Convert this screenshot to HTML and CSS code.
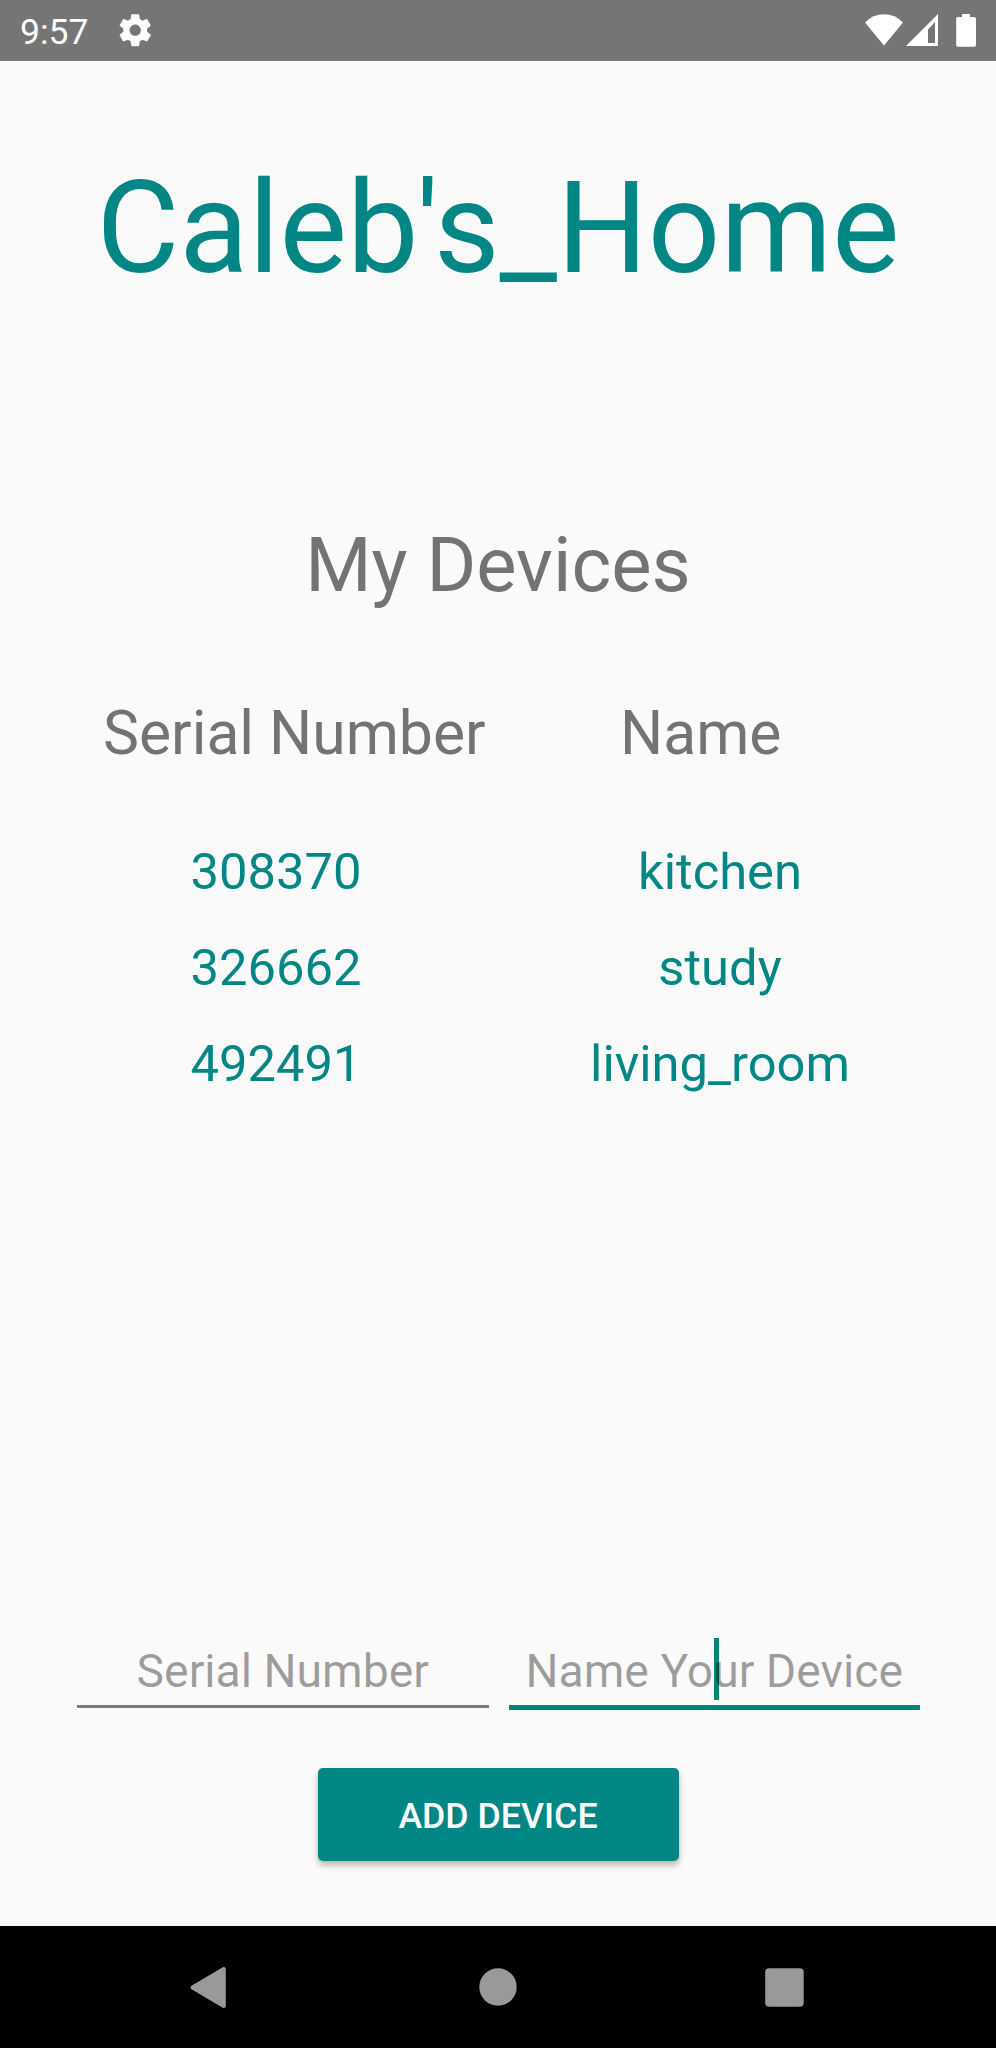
FILE: index.html
```html
<!DOCTYPE html>
<html lang="en">
<head>
<meta charset="utf-8">
<title>Caleb's_Home</title>
<link rel="stylesheet" href="styles.css">
</head>
<body>
<div class="screen">
  <header class="status-bar">
    <span class="clock">9:57</span>
    <svg class="gear" viewBox="0 0 24 24"><path fill="#fff" d="M19.43 12.98c.04-.32.07-.64.07-.98s-.03-.66-.07-.98l2.11-1.65c.19-.15.24-.42.12-.64l-2-3.46c-.12-.22-.39-.3-.61-.22l-2.49 1c-.52-.4-1.08-.73-1.69-.98l-.38-2.65C14.46 2.18 14.25 2 14 2h-4c-.25 0-.46.18-.49.42l-.38 2.65c-.61.25-1.17.59-1.69.98l-2.49-1c-.23-.09-.49 0-.61.22l-2 3.46c-.13.22-.07.49.12.64l2.11 1.65c-.04.32-.07.65-.07.98s.03.66.07.98l-2.11 1.65c-.19.15-.24.42-.12.64l2 3.46c.12.22.39.3.61.22l2.49-1c.52.4 1.08.73 1.69.98l.38 2.65c.03.24.24.42.49.42h4c.25 0 .46-.18.49-.42l.38-2.65c.61-.25 1.17-.59 1.69-.98l2.49 1c.23.09.49 0 .61-.22l2-3.46c.12-.22.07-.49-.12-.64l-2.11-1.65zM12 15.5c-1.93 0-3.5-1.57-3.5-3.5s1.57-3.5 3.5-3.5 3.5 1.57 3.5 3.5-1.57 3.5-3.5 3.5z"/></svg>
    <svg class="system-icons" viewBox="0 0 114 61">
      <path fill="#fff" d="M1 22.5Q9 14.2 20 14.2T39 22.5L20 45.5Z"/>
      <path fill="#fff" fill-rule="evenodd" d="M42 46L74 14V46ZM64 29.5V43H71V22Z"/>
      <path fill="#fff" d="M98 14H106V17H110.200Q112 17 112 18.800V44.900Q112 46.700 110.200 46.700H94Q92.200 46.700 92.200 44.900V18.800Q92.200 17 94 17H98Z"/>
    </svg>
  </header>

  <main class="content">
    <h1 class="title">Caleb's_Home</h1>
    <h2 class="subtitle">My Devices</h2>
    <div class="column-heads">
      <span class="head-serial">Serial Number</span>
      <span class="head-name">Name</span>
    </div>
    <div class="devices">
      <span>308370</span><span>kitchen</span>
      <span>326662</span><span>study</span>
      <span>492491</span><span>living_room</span>
    </div>
    <div class="fields">
      <div class="field"><span class="hint">Serial Number</span></div>
      <div class="field focused"><i class="caret"></i><span class="hint">Name Your Device</span></div>
    </div>
    <button class="add" type="button">ADD DEVICE</button>
  </main>

  <nav class="nav-bar">
    <svg class="nav-icons" viewBox="0 0 996 122">
      <path fill="#999" stroke="#999" stroke-width="4" stroke-linejoin="round" d="M192.500 61.500L223.800 43V80Z"/>
      <circle fill="#999" cx="498" cy="61" r="18.700"/>
      <rect fill="#999" x="765.200" y="42.300" width="38.500" height="38.500" rx="4"/>
    </svg>
  </nav>
</div>
</body>
</html>
```
FILE: styles.css
```css
body {
  margin: 0;
  font-family: Roboto, "Liberation Sans", sans-serif;
  font-weight: 400;
}

.screen {
  display: flex;
  flex-direction: column;
  width: 996px;
  height: 2048px;
  overflow: hidden;
  background: #fafafa;
  color: #737373;
}

.status-bar {
  display: flex;
  align-items: center;
  flex: none;
  box-sizing: border-box;
  height: 61px;
  padding: 0 18px 0 20px;
  background: #757575;
}

.clock {
  width: 96px;
  padding-top: 3px;
  color: #fff;
  font-size: 35.500px;
  line-height: 40px;
}

.gear {
  width: 38.400px;
  height: 38.400px;
}

.system-icons {
  width: 114px;
  height: 61px;
  margin-left: auto;
}

.content {
  display: flex;
  flex: 1;
  flex-direction: column;
}

.title,
.subtitle {
  margin: 0;
  font-weight: 400;
  text-align: center;
  white-space: nowrap;
}

.title {
  padding-top: 93px;
  color: #008685;
  font-size: 127.300px;
  line-height: 150px;
}

.subtitle {
  padding-top: 216px;
  font-size: 76px;
  line-height: 90px;
}

.column-heads {
  display: flex;
  padding: 88px 0 0 103px;
  font-size: 60.600px;
  line-height: 72px;
}

.head-serial {
  width: 517px;
}

.devices {
  display: grid;
  grid-template-columns: 1fr 1fr;
  grid-auto-rows: 96px;
  padding: 54px 54px 0;
  color: #008685;
  font-size: 50.700px;
  line-height: 96px;
  text-align: center;
}

.fields {
  display: grid;
  grid-template-columns: 1fr 1fr;
  align-items: start;
  gap: 20px;
  padding: 531px 76px 0 77px;
}

.field {
  position: relative;
  box-sizing: border-box;
  height: 65px;
  border-bottom: 3px solid #7b7b7b;
  color: rgba(0, 0, 0, 0.38);
  font-size: 46.300px;
  line-height: 56px;
  text-align: center;
  white-space: nowrap;
}

.focused {
  height: 67px;
  border-bottom: 5px solid #008577;
}

.hint {
  position: relative;
}

.caret {
  position: absolute;
  top: -5px;
  left: 205px;
  width: 5px;
  height: 62px;
  background: #008577;
}

.add {
  align-self: center;
  width: 361px;
  height: 93px;
  margin: 58px 0 0;
  padding: 3px 0 0;
  border: 0;
  border-radius: 5px;
  background: #008685;
  box-shadow: 0 4px 6px rgba(0, 0, 0, 0.28);
  color: #fff;
  font-family: inherit;
  font-size: 35.700px;
  font-weight: 500;
  line-height: 90px;
}

.nav-bar {
  flex: none;
  height: 122px;
  background: #000;
}

.nav-icons {
  display: block;
  width: 996px;
  height: 122px;
}
```
